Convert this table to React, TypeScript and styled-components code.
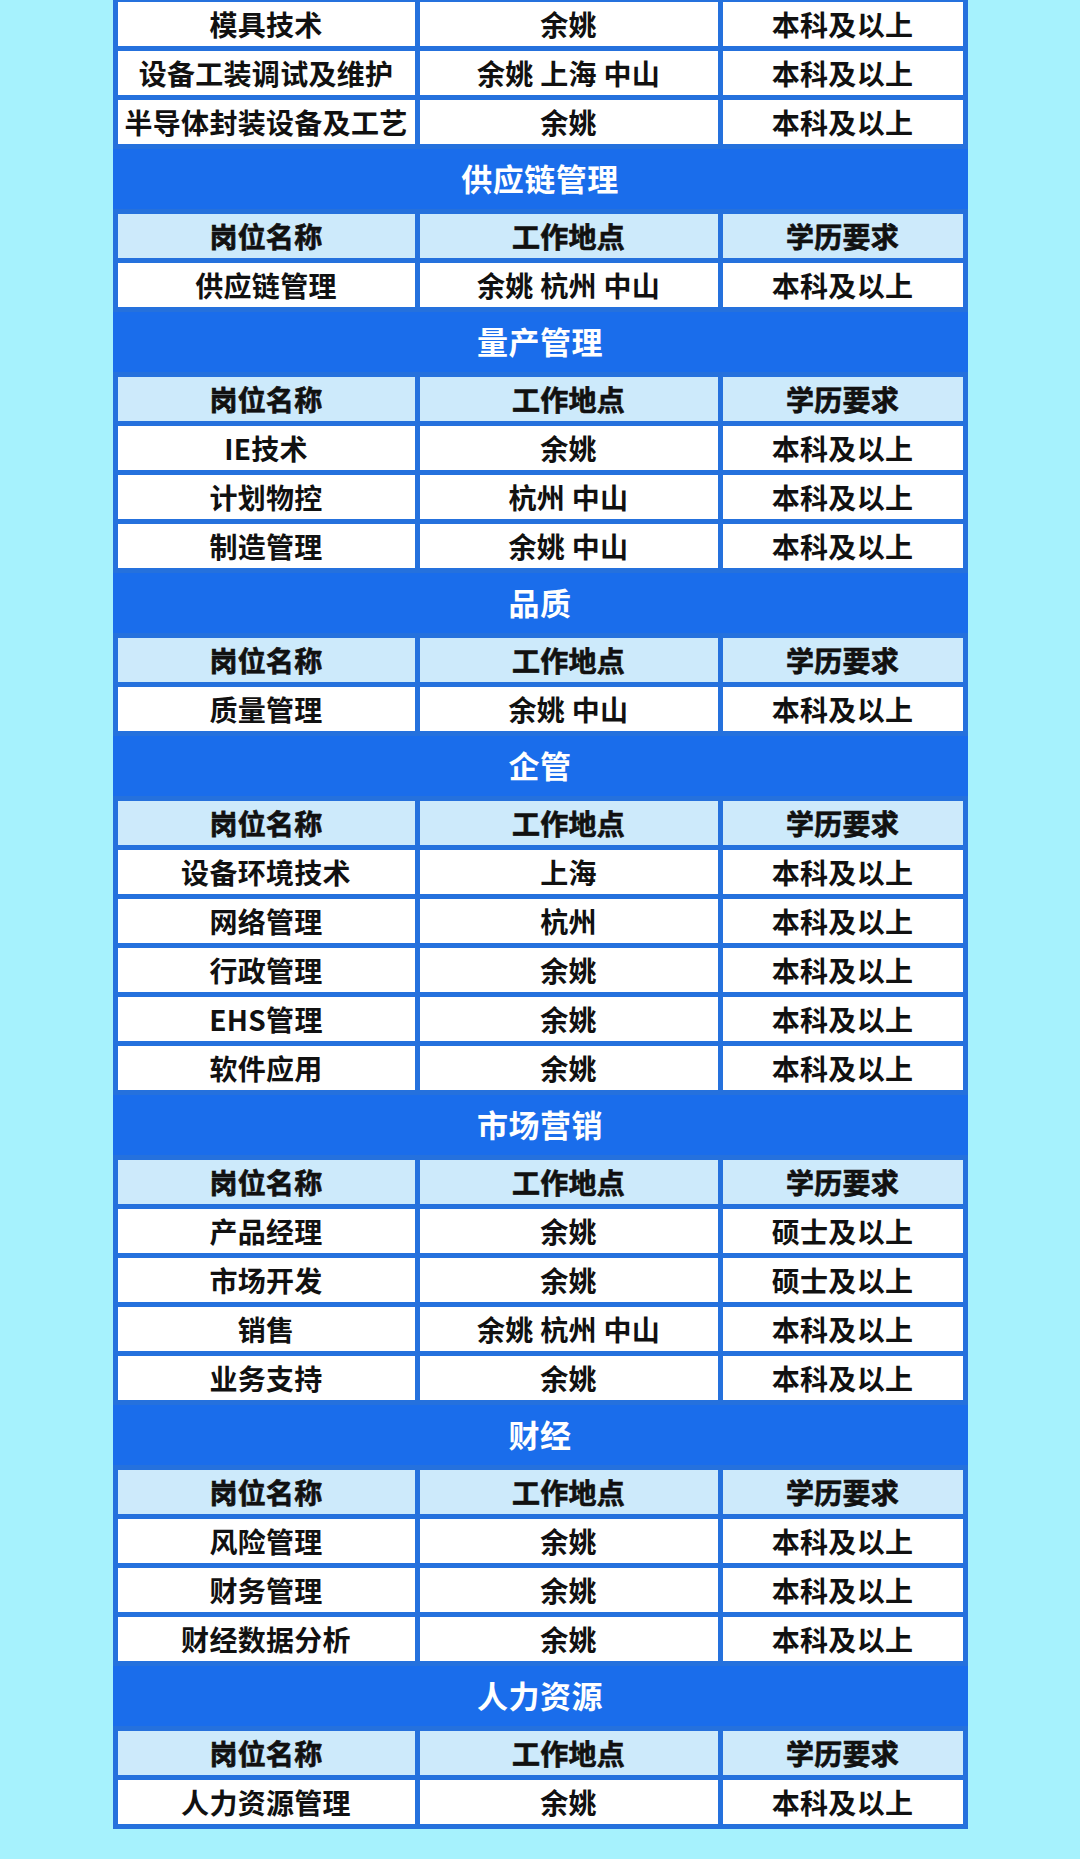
import React from 'react';
import styled, { createGlobalStyle } from 'styled-components';

const GlobalStyle = createGlobalStyle`
  html, body {
    margin: 0;
    padding: 0;
    background: #a6f2fd;
  }
`;

const Page = styled.div`
  min-height: 1859px;
  background: #a6f2fd;
  font-family: "Noto Sans CJK SC", "Noto Sans", sans-serif;
  overflow: hidden;
`;

const Table = styled.div`
  width: 855px;
  margin: -3px auto 0;
  box-sizing: border-box;
  padding: 5px;
  background: #2571dd;
  display: grid;
  grid-template-columns: 297px 298px 240px;
  gap: 5px;
`;

const SectionTitle = styled.div`
  grid-column: 1 / -1;
  height: 60px;
  margin: 0 -5px;
  padding-bottom: 3px;
  box-sizing: border-box;
  background: #1a6deb;
  color: #ffffff;
  font-size: 31px;
  font-weight: 700;
  display: flex;
  align-items: center;
  justify-content: center;
  letter-spacing: 0.5px;
`;

const Cell = styled.div<{ $head?: boolean }>`
  height: 44px;
  display: flex;
  align-items: center;
  justify-content: center;
  background: ${({ $head }) => ($head ? '#cdeafb' : '#ffffff')};
  color: #111111;
  font-size: 28px;
  font-weight: 700;
  -webkit-text-stroke: ${({ $head }) => ($head ? '0.7px #111111' : '0')};
  white-space: nowrap;
  letter-spacing: 0.3px;
`;

type Job = [string, string, string];

type Group = {
  title?: string;
  jobs: Job[];
};

const BK = '本科及以上';
const SS = '硕士及以上';

const groups: Group[] = [
  {
    jobs: [
      ['模具技术', '余姚', BK],
      ['设备工装调试及维护', '余姚 上海 中山', BK],
      ['半导体封装设备及工艺', '余姚', BK],
    ],
  },
  {
    title: '供应链管理',
    jobs: [['供应链管理', '余姚 杭州 中山', BK]],
  },
  {
    title: '量产管理',
    jobs: [
      ['IE技术', '余姚', BK],
      ['计划物控', '杭州 中山', BK],
      ['制造管理', '余姚 中山', BK],
    ],
  },
  {
    title: '品质',
    jobs: [['质量管理', '余姚 中山', BK]],
  },
  {
    title: '企管',
    jobs: [
      ['设备环境技术', '上海', BK],
      ['网络管理', '杭州', BK],
      ['行政管理', '余姚', BK],
      ['EHS管理', '余姚', BK],
      ['软件应用', '余姚', BK],
    ],
  },
  {
    title: '市场营销',
    jobs: [
      ['产品经理', '余姚', SS],
      ['市场开发', '余姚', SS],
      ['销售', '余姚 杭州 中山', BK],
      ['业务支持', '余姚', BK],
    ],
  },
  {
    title: '财经',
    jobs: [
      ['风险管理', '余姚', BK],
      ['财务管理', '余姚', BK],
      ['财经数据分析', '余姚', BK],
    ],
  },
  {
    title: '人力资源',
    jobs: [['人力资源管理', '余姚', BK]],
  },
];

const headings = ['岗位名称', '工作地点', '学历要求'];

export default function App() {
  return (
    <Page>
      <GlobalStyle />
      <Table>
        {groups.map((group, gi) => (
          <React.Fragment key={gi}>
            {group.title && (
              <>
                <SectionTitle>{group.title}</SectionTitle>
                {headings.map((h) => (
                  <Cell $head key={h}>
                    {h}
                  </Cell>
                ))}
              </>
            )}
            {group.jobs.map((job, ji) =>
              job.map((text, ci) => <Cell key={`${ji}-${ci}`}>{text}</Cell>)
            )}
          </React.Fragment>
        ))}
      </Table>
    </Page>
  );
}
